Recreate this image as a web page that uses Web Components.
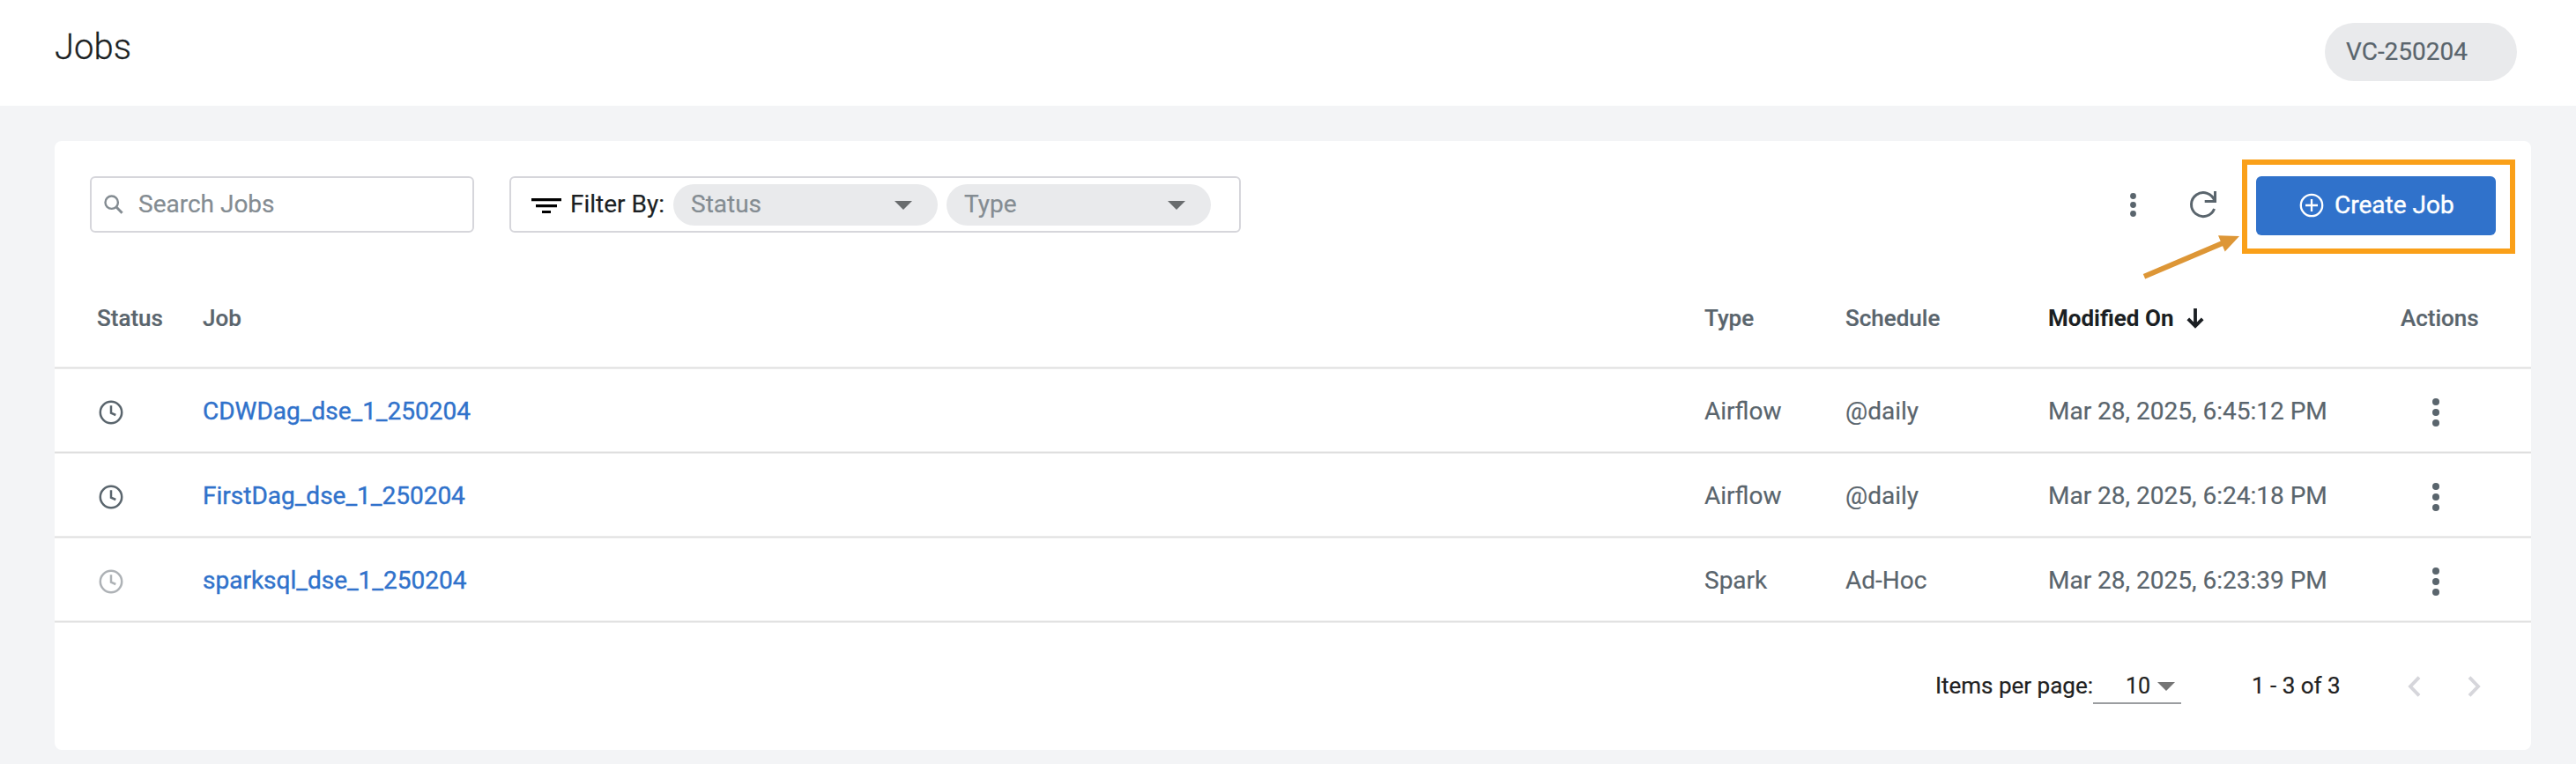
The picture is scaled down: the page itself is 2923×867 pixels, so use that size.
<!DOCTYPE html>
<html lang="en"><head><meta charset="utf-8"><title>Jobs</title>
<style>
body{margin:0;background:#f3f4f6;font-family:Roboto,sans-serif;font-size:28px;color:#1b1f23;-webkit-text-stroke:.2px}
</style></head><body>
<jobs-app></jobs-app>
<script>
const define=(name,html,upgrade)=>customElements.define(name,class extends HTMLElement{
  constructor(){super();const t=document.createElement('template');t.innerHTML=html;
    this.attachShadow({mode:'open'}).append(t.content.cloneNode(true));}
  connectedCallback(){if(upgrade)upgrade(this,this.shadowRoot);}
});

const ICONS={
  search:[22,22,'<circle cx="8.7" cy="8.7" r="7.2" fill="none" stroke="currentColor" stroke-width="2.4"/><path d="M13.8 13.8L20.6 20.8" stroke="currentColor" stroke-width="3"/>'],
  filter:[34,17,'<path d="M0 1.7H34M5 8.6H29M12 15.5H22" stroke="currentColor" stroke-width="3.2"/>'],
  caret:[20,10,'<path d="M0 0H20L10 10Z" fill="currentColor"/>'],
  kebab:[8,32,'<circle cx="4" cy="4" r="4" fill="currentColor"/><circle cx="4" cy="16" r="4" fill="currentColor"/><circle cx="4" cy="28" r="4" fill="currentColor"/>'],
  kebabSmall:[7,27,'<g fill="currentColor"><circle cx="3.5" cy="3.5" r="3.4"/><circle cx="3.5" cy="13.5" r="3.4"/><circle cx="3.5" cy="23.5" r="3.4"/></g>'],
  refresh:[30,30,'<g fill="none" stroke="currentColor" stroke-width="3"><path d="M27.6 20A13.5 13.5 0 1 1 27.9 11"/><path d="M28.5 0V11.5H16.7"/></g>'],
  plus:[28,28,'<g fill="none" stroke="currentColor" stroke-width="2.3"><circle cx="14" cy="14" r="12.2"/><path d="M14 7V21M7 14H21"/></g>'],
  down:[20,23,'<path d="M10 0V20M1.8 11.8L10 20L18.2 11.8" fill="none" stroke="currentColor" stroke-width="3.8"/>'],
  clock:[28,28,'<g fill="none" stroke="currentColor" stroke-width="2.5"><circle cx="14" cy="14" r="12.2"/><path d="M14 6.2V14.7L19.3 17"/></g>'],
  prev:[16,24,'<path d="M14 1.6L4 12L14 22.4" fill="none" stroke="currentColor" stroke-width="3.9"/>'],
  next:[16,24,'<path d="M2 1.6L12 12L2 22.4" fill="none" stroke="currentColor" stroke-width="3.9"/>']
};
define('ui-icon','<style>:host{display:inline-block;flex:none}svg{display:block;overflow:visible}</style><span></span>',(el,r)=>{
  const [w,h,m]=ICONS[el.getAttribute('name')];
  r.querySelector('span').innerHTML=`<svg width="${w}" height="${h}" viewBox="0 0 ${w} ${h}">${m}</svg>`;
});

define('page-header',`<style>
:host{display:flex;justify-content:space-between;height:120px;box-sizing:border-box;padding:26px 67px 0 62px;background:#fff}
h1{margin:0;padding-top:1px;font-size:40px;line-height:54px;font-weight:300;color:#1b1f23;-webkit-text-stroke:.3px}
.vc{width:218px;height:66px;box-sizing:border-box;border-radius:33px;background:#e9eaec;color:#5a656d;padding-left:24px;line-height:65px;white-space:nowrap}
</style><h1><slot name="title"></slot></h1><div class="vc"><slot name="cluster"></slot></div>`);

define('search-field',`<style>
:host{display:flex;align-items:center;box-sizing:border-box;width:436px;height:64px;border:2px solid #d6d6db;border-radius:6px;padding-left:14px;gap:17px;color:#848c92}
span{padding-bottom:1px}
</style><ui-icon name="search"></ui-icon><span><slot></slot></span>`);

define('filter-pill',`<style>
:host{display:flex;align-items:center;justify-content:space-between;box-sizing:border-box;width:300px;height:47px;border-radius:24px;background:#e9eaec;margin-top:1px;padding:0 29px 0 20px;color:#848c92}
span{padding-bottom:2px}
ui-icon{color:#696c6e}
</style><span><slot></slot></span><ui-icon name="caret"></ui-icon>`);

define('filter-bar',`<style>
:host{display:flex;align-items:center;box-sizing:border-box;width:830px;height:64px;border:2px solid #d6d6db;border-radius:6px;padding-left:23px;color:#1b1f23}
ui-icon{color:#000;margin-top:3px}
.l{width:117px;padding:0 0 1px 10px;white-space:nowrap;box-sizing:border-box}
.p{display:flex;gap:10px;margin-left:10px}
</style><ui-icon name="filter"></ui-icon><span class="l">Filter By:</span><div class="p"><slot></slot></div>`);

define('create-button',`<style>
:host{display:block;position:relative}
button{all:unset;display:flex;align-items:center;box-sizing:border-box;width:272px;height:67px;border-radius:6px;background:#3072cb;color:#fff;padding:0 0 2px 49px;gap:12px;-webkit-text-stroke:.4px #fff}
.ring{position:absolute;left:-16px;top:-19px;width:310px;height:107px;box-sizing:border-box;border:6px solid #faa019}
.arrow{position:absolute;left:-130px;top:60px}
</style><button><ui-icon name="plus"></ui-icon><span><slot></slot></span></button>
<div class="ring"></div>
<svg class="arrow" width="116" height="60"><path d="M3 53.8L93 15.5" stroke="#dd9636" stroke-width="6"/><path d="M87 7.2L111 8.1L94.7 25.4Z" fill="#dd9636"/></svg>`);

define('job-toolbar',`<style>
:host{display:flex;align-items:flex-start;height:120px;padding:40px 40px 0;box-sizing:border-box}
filter-bar{margin-left:40px}
.a{margin-left:auto;display:flex;align-items:center;color:#5a656d;height:64px}
.k{margin-right:61px}.r{margin-right:45px}
create-button{height:64px}
</style><search-field>Search Jobs</search-field>
<filter-bar><filter-pill>Status</filter-pill><filter-pill>Type</filter-pill></filter-bar>
<div class="a"><ui-icon class="k" name="kebabSmall"></ui-icon><ui-icon class="r" name="refresh"></ui-icon><create-button>Create Job</create-button></div>`);

const GRID='display:grid;grid-template-columns:120px 1704px 160px 230px 400px 148px;padding-left:48px;box-sizing:border-box;align-items:center;border-bottom:1px solid #dfdfdf;box-shadow:0 1px 0 #eeeeee,inset 0 -1px 0 #eeeeee;white-space:nowrap;';
define('table-head',`<style>
:host{${GRID}height:138px;font-size:26px;font-weight:500;color:#5a656d;padding-top:25px}
.m{color:#1b1f23;font-weight:700;display:flex;align-items:center;gap:15px;-webkit-text-stroke:0}
</style><span>Status</span><span>Job</span><span>Type</span><span>Schedule</span><span class="m">Modified On<ui-icon name="down"></ui-icon></span><span>Actions</span>`);

define('job-row',`<style>
:host{${GRID}height:96px;color:#5a656d;padding-top:2px}
.n{color:#3072cb;-webkit-text-stroke:.4px #3072cb}
.c{margin:3px 0 0 2px}:host([idle]) .c{color:#aeb2b6}
.k{margin:3px 0 0 36px}
</style><ui-icon class="c" name="clock"></ui-icon><span class="n"><slot></slot></span><span class="t"></span><span class="s"></span><span class="d"></span><ui-icon class="k" name="kebab"></ui-icon>`,(el,r)=>{
  r.querySelector('.t').textContent=el.getAttribute('type');
  r.querySelector('.s').textContent=el.getAttribute('schedule');
  r.querySelector('.d').textContent=el.getAttribute('modified');
});

define('table-pager',`<style>
:host{display:flex;justify-content:flex-end;align-items:center;height:145px;box-sizing:border-box;padding:0 56px 1px 0;font-size:26px;color:#212121;white-space:nowrap}
.sel{display:flex;align-items:center;gap:8px;width:100px;height:42px;box-sizing:border-box;border-bottom:2px solid #9b9da0;padding:2px 0 0 37px;font-size:25px}
.sel ui-icon{color:#757575;margin-top:2px}
.range{margin-left:80px;width:101px}
.nav{display:flex;gap:53px;margin:2px 0 0 75px;color:#d6d6db}
</style><span>Items per page:</span><div class="sel"><span>10</span><ui-icon name="caret"></ui-icon></div>
<span class="range">1 - 3 of 3</span><div class="nav"><ui-icon name="prev"></ui-icon><ui-icon name="next"></ui-icon></div>`);

define('jobs-card',`<style>
:host{display:block;margin:40px 51px 16px 62px;height:691px;background:#fff;border-radius:8px}
</style><job-toolbar></job-toolbar><table-head></table-head><slot></slot><table-pager></table-pager>`);

define('jobs-app',`<style>:host{display:block;height:867px;overflow:hidden;background:#f3f4f6}</style>
<page-header><span slot="title">Jobs</span><span slot="cluster">VC-250204</span></page-header>
<jobs-card>
<job-row type="Airflow" schedule="@daily" modified="Mar 28, 2025, 6:45:12 PM">CDWDag_dse_1_250204</job-row>
<job-row type="Airflow" schedule="@daily" modified="Mar 28, 2025, 6:24:18 PM">FirstDag_dse_1_250204</job-row>
<job-row idle type="Spark" schedule="Ad-Hoc" modified="Mar 28, 2025, 6:23:39 PM">sparksql_dse_1_250204</job-row>
</jobs-card>`);
</script></body></html>
